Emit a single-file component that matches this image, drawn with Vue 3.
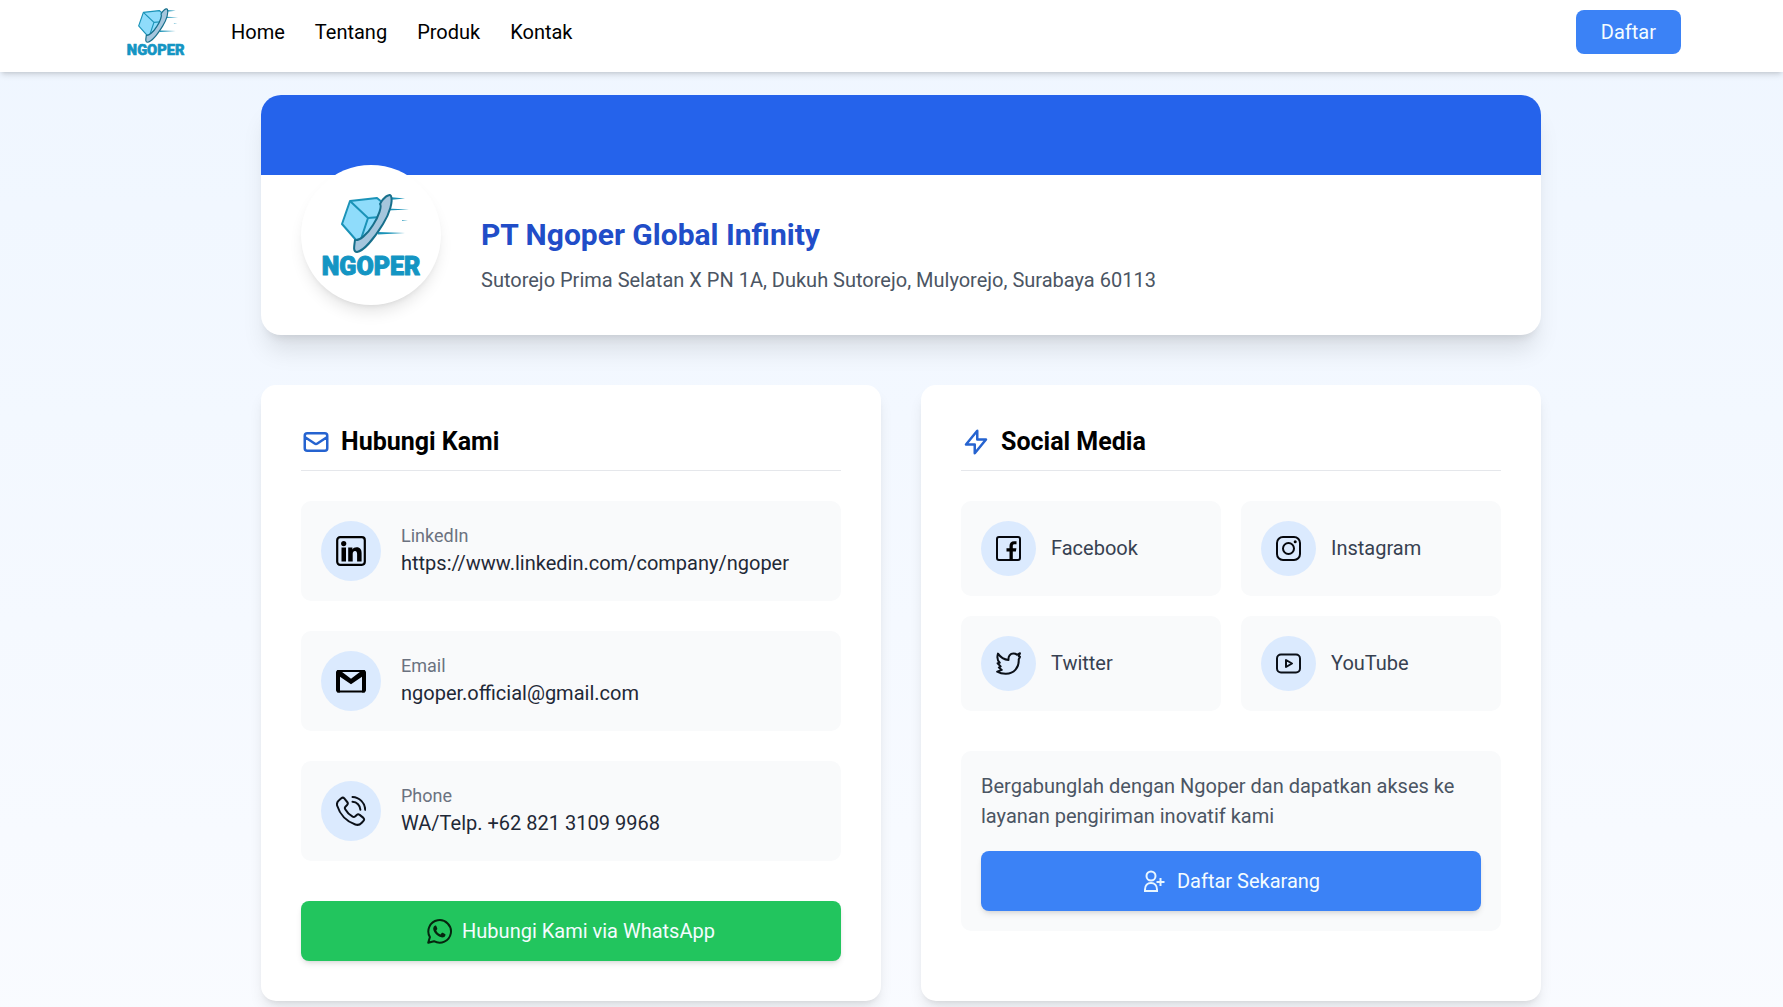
<script setup>
import { h } from 'vue'

const navLinks = ['Home', 'Tentang', 'Produk', 'Kontak']

const contacts = [
  { id: 'linkedin', label: 'LinkedIn', value: 'https://www.linkedin.com/company/ngoper' },
  { id: 'email', label: 'Email', value: 'ngoper.official@gmail.com' },
  { id: 'phone', label: 'Phone', value: 'WA/Telp. +62 821 3109 9968' },
]

const socials = [
  { id: 'facebook', label: 'Facebook' },
  { id: 'instagram', label: 'Instagram' },
  { id: 'twitter', label: 'Twitter' },
  { id: 'youtube', label: 'YouTube' },
]

const BrandLogo = (props) =>
  h('svg', { viewBox: props.box, 'aria-label': 'Ngoper', role: 'img' }, [
    h('path', {
      d: 'M88 32L104 33.500L88 35ZM86 43.500L108 44.500L86 45.500ZM77 67L104 68L77 69.500ZM101 55.200L107 55.500L101 56Z',
      fill: '#1b93b8',
    }),
    h('g', { fill: '#8fdcfb', stroke: '#1b93b8', 'stroke-width': 2, 'stroke-linejoin': 'round' }, [
      h('path', { d: 'M49 36L76 33L82 38L76 58L61 74L55 75L41 59Z' }),
      h('path', { d: 'M49 36L67 53L79 52M67 53L60 74', fill: 'none' }),
    ]),
    h('path', {
      d: 'M54 75C53 82 52 87 56 87C63 86 74 72 82 59C89 48 92 36 90 31C88 28 82 33 79 39C81 41 78 51 72 60C66 70 58 76 54 75Z',
      fill: '#a5c6dd', stroke: '#176f8b', 'stroke-width': 2, 'stroke-linejoin': 'round',
    }),
    h('text', {
      x: 70, y: 109.5, 'text-anchor': 'middle', fill: '#1495c3', stroke: '#1495c3',
      'stroke-width': 1, 'stroke-linejoin': 'round', 'font-size': 25,
      'font-weight': 900, 'font-family': 'Roboto, sans-serif',
    }, 'NGOPER'),
  ])
BrandLogo.props = ['box']
</script>

<template>
  <div class="page">
    <header class="topbar">
      <div class="topbar-inner">
        <a href="#" class="brand"><BrandLogo class="brand-logo" box="11 15 119 109" /></a>
        <nav class="nav">
          <a v-for="link in navLinks" :key="link" href="#">{{ link }}</a>
        </nav>
        <button type="button" class="btn-register">Daftar</button>
      </div>
    </header>

    <main class="content">
      <section class="hero">
        <div class="hero-banner"></div>
        <div class="hero-body">
          <div class="avatar"><BrandLogo box="0 0 140 140" /></div>
          <div class="hero-text">
            <h1>PT Ngoper Global Infinity</h1>
            <p>Sutorejo Prima Selatan X PN 1A, Dukuh Sutorejo, Mulyorejo, Surabaya 60113</p>
          </div>
        </div>
      </section>

      <div class="columns">
        <section class="card">
          <h2>
            <svg viewBox="0 0 24 24" class="heading-icon"><path d="M3 8l7.890 5.260a2 2 0 002.220 0L21 8M5 19h14a2 2 0 002-2V7a2 2 0 00-2-2H5a2 2 0 00-2 2v10a2 2 0 002 2z" /></svg>
            Hubungi Kami
          </h2>
          <ul class="contacts">
            <li v-for="c in contacts" :key="c.id" class="contact">
              <span class="badge">
                <svg v-if="c.id === 'linkedin'" viewBox="0 0 30 30">
                  <rect x="1.200" y="1.200" width="27.600" height="27.600" rx="3" fill="none" stroke="#000" stroke-width="2.200" />
                  <circle cx="7.700" cy="7.600" r="2.600" />
                  <path d="M5.500 11.600h4.500V25.400H5.500zM12.200 11.600h4.200v1.900c.8-1.300 2.200-2.200 4.200-2.200 3.700 0 5 2.400 5 5.900V25.400h-4.500v-7.200c0-1.700-.4-3.100-2.100-3.100s-2.300 1.300-2.300 3.100V25.400h-4.500z" />
                </svg>
                <svg v-else-if="c.id === 'email'" viewBox="0 0 30 30">
                  <path d="M2 5h26v20.500H2z" fill="none" stroke="#000" stroke-width="1.800" />
                  <path d="M2.500 4C1 4 0 5 0 6.500V24c0 1.500 1 2.500 2.500 2.500H4V10.800l11 7.500 11-7.500v15.700h1.500c1.500 0 2.500-1 2.500-2.500V6.500C30 5 29 4 27.500 4h-1L15 12.800 3.500 4z" />
                </svg>
                <svg v-else viewBox="0 0 30 30" class="line">
                  <path d="M3 4.200L5.300 2.200C6.300 1.400 7.500 1.500 8.300 2.400L11.200 6C12 7 11.900 8.200 11.100 9L9.400 10.700C8.700 11.400 8.700 12.300 9.200 13.200C10.900 16.200 13.500 18.900 16.600 20.700C17.500 21.200 18.400 21.100 19.100 20.400L20.700 18.900C21.600 18.100 22.800 18.100 23.700 18.900L27.400 21.900C28.300 22.700 28.400 23.900 27.500 24.800L25.500 27C23.900 28.700 21.700 29.300 19.300 28.500C10.700 25.500 3.800 18.300 1.200 9.800C.5 7.500 1.300 5.600 3 4.200Z" />
                  <path d="M16.500 1C23.400 1.200 29 6.900 29.200 13.800M16.500 5.800C20.900 6 24.200 9.400 24.400 13.800" />
                </svg>
              </span>
              <span class="contact-text">
                <span class="contact-label">{{ c.label }}</span>
                <span class="contact-value">{{ c.value }}</span>
              </span>
            </li>
          </ul>
          <button type="button" class="btn btn-whatsapp">
            <svg viewBox="0 0 25 25">
              <path d="M1.200 23.800L2.900 18.100A11.300 11.300 0 1 1 7 22.200Z" fill="none" stroke="#06250f" stroke-width="2" stroke-linejoin="round" />
              <path d="M8.300 6.400c.5 0 .8.100 1 .6l.9 2.200c.2.500.1.800-.2 1.200l-.8 1c.9 1.800 2.300 3.200 4.300 4.100l1.200-1.400c.3-.4.600-.5 1.100-.3l2.200 1.100c.5.200.6.500.5 1-.3 1.700-1.700 2.500-3.300 2.500-4.200-.3-8.400-4.200-9-8.300 0-1.500.7-3.500 2.100-3.700z" fill="#06250f" />
            </svg>
            Hubungi Kami via WhatsApp
          </button>
        </section>

        <section class="card">
          <h2>
            <svg viewBox="0 0 24 24" class="heading-icon"><path d="M13 10V3L4 14h7v7l9-11h-7z" /></svg>
            Social Media
          </h2>
          <div class="socials">
            <a v-for="s in socials" :key="s.id" href="#" class="social">
              <span class="badge badge-small">
                <svg v-if="s.id === 'facebook'" viewBox="0 0 25 25">
                  <rect x="1" y="1" width="23" height="23" rx="2" fill="none" stroke="#05070d" stroke-width="2" />
                  <path d="M13.500 24v-8.500h-3v-3.200h3V10c0-3 1.700-4.800 4.700-4.800h2.300v3h-1.900c-1.300 0-1.800.6-1.800 1.800v2.300h3.600l-.5 3.200h-3.100V24z" />
                </svg>
                <svg v-else-if="s.id === 'instagram'" viewBox="0 0 25 25">
                  <g fill="none" stroke="#05070d" stroke-width="2">
                    <rect x="1" y="1" width="23" height="23" rx="6" />
                    <circle cx="12.500" cy="12.500" r="5.500" />
                  </g>
                  <circle cx="19.200" cy="5.800" r="1.500" />
                </svg>
                <svg v-else-if="s.id === 'twitter'" viewBox="0 0 25 25" class="line">
                  <path d="M24 5.800L22.700 8.500C23.200 16.500 18 22.600 10 22.800C6 22.900 3.200 21.800 1.200 20.600L5.800 18.900L2.900 16.500L4.600 15.400L1.600 12.200L3.800 11.700C1.400 9.600 .9 6.200 2 2.600C4.600 6.400 8.200 8.600 12.500 8.900C12.100 5.200 14.200 2.600 17.400 2.600C18.800 2.600 20 3 20.900 3.800L24 2.200L22.800 5.200Z" />
                </svg>
                <svg v-else viewBox="0 0 25 25" class="line">
                  <rect x="1" y="3.500" width="23" height="18" rx="4" />
                  <path d="M10 9v7l6-3.500z" />
                </svg>
              </span>
              {{ s.label }}
            </a>
          </div>
          <div class="join">
            <p>Bergabunglah dengan Ngoper dan dapatkan akses ke layanan pengiriman inovatif kami</p>
            <button type="button" class="btn btn-join">
              <svg viewBox="0 0 25 25" fill="none" stroke="#e8f6ff" stroke-width="2">
                <circle cx="9" cy="7" r="4.500" />
                <path d="M3 22v-1.500c0-4 2.500-6.500 6-6.500s6 2.500 6 6.500V22zM18.500 9v8M14.500 13h8" />
              </svg>
              Daftar Sekarang
            </button>
          </div>
        </section>
      </div>
    </main>
  </div>
</template>

<style>
body {
  margin: 0;
}
</style>

<style scoped>
* {
  box-sizing: border-box;
}
.page {
  min-height: 100vh;
  background: linear-gradient(to bottom, #eff6ff, #f9fbff);
  font-family: Roboto, "Liberation Sans", sans-serif;
  font-size: 20px;
  line-height: 30px;
  color: #000;
  overflow: hidden;
}
a {
  color: inherit;
  text-decoration: none;
}
button {
  border: 0;
  font-family: inherit;
  font-size: 20px;
  font-weight: 400;
  line-height: 30px;
  color: #f4fcff;
  border-radius: 8px;
  cursor: pointer;
}
svg {
  display: block;
  flex: none;
}
.topbar {
  position: relative;
  padding: 0 0 8px 19px;
  background: #fff;
  box-shadow: 0 4px 6px -1px rgba(0, 0, 0, 0.12), 0 2px 4px -2px rgba(0, 0, 0, 0.12);
}
.topbar-inner {
  display: flex;
  align-items: center;
  max-width: 1560px;
  height: 64px;
  margin: 0 auto;
}
.brand-logo {
  width: 70px;
  height: 64px;
}
.nav {
  display: flex;
  gap: 30px;
  margin-left: 40px;
}
.btn-register {
  margin-left: auto;
  padding: 7px 25px;
  background: #3b82f6;
}
.content {
  padding: 23px 0 40px 19px;
  max-width: 1299px;
  margin: 0 auto;
}
.hero {
  border-radius: 20px;
  background: #fff;
  box-shadow: 0 20px 25px -5px rgba(0, 0, 0, 0.1), 0 8px 10px -6px rgba(0, 0, 0, 0.1);
}
.hero-banner {
  height: 80px;
  border-radius: 20px 20px 0 0;
  background: #2563eb;
}
.hero-body {
  display: flex;
  gap: 40px;
  padding: 0 40px 30px;
}
.avatar {
  flex: none;
  width: 140px;
  height: 140px;
  margin-top: -10px;
  border-radius: 50%;
  background: #fff;
  box-shadow: 0 10px 15px -3px rgba(0, 0, 0, 0.1), 0 4px 6px -4px rgba(0, 0, 0, 0.1);
}
.hero-text {
  padding-top: 40px;
}
h1 {
  margin: 0 0 10px;
  font-size: 30px;
  line-height: 40px;
  font-weight: 700;
  color: #214dc8;
}
p {
  margin: 0;
  color: #4b5563;
}
.columns {
  display: grid;
  grid-template-columns: 1fr 1fr;
  gap: 40px;
  margin-top: 50px;
}
.card {
  padding: 40px;
  border-radius: 15px;
  background: #fff;
  box-shadow: 0 10px 15px -3px rgba(0, 0, 0, 0.1), 0 4px 6px -4px rgba(0, 0, 0, 0.1);
}
h2 {
  display: flex;
  align-items: center;
  gap: 10px;
  margin: 0 0 30px;
  padding-bottom: 11px;
  border-bottom: 1px solid #e5e7eb;
  font-size: 25px;
  line-height: 34px;
  font-weight: 700;
}
.heading-icon {
  width: 30px;
  height: 30px;
  fill: none;
  stroke: #2563d0;
  stroke-width: 2;
  stroke-linecap: round;
  stroke-linejoin: round;
}
.contacts {
  display: flex;
  flex-direction: column;
  gap: 30px;
  margin: 0;
  padding: 0;
  list-style: none;
}
.contact {
  display: flex;
  align-items: center;
  gap: 20px;
  padding: 20px;
  border-radius: 10px;
  background: #f9fafb;
}
.badge {
  display: flex;
  flex: none;
  padding: 15px;
  border-radius: 50%;
  background: #dbeafe;
}
.badge svg {
  width: 30px;
  height: 30px;
}
.badge-small svg {
  width: 25px;
  height: 25px;
}
.line {
  fill: none;
  stroke: #0b1018;
  stroke-width: 2;
  stroke-linecap: round;
  stroke-linejoin: round;
}
.contact-text {
  display: flex;
  flex-direction: column;
}
.contact-label {
  font-size: 18px;
  line-height: 24px;
  color: #6b7280;
}
.contact-value {
  color: #1f2937;
}
.btn {
  display: flex;
  align-items: center;
  justify-content: center;
  gap: 10px;
  width: 100%;
  padding: 15px;
  box-shadow: 0 4px 6px -1px rgba(0, 0, 0, 0.1), 0 2px 4px -2px rgba(0, 0, 0, 0.1);
}
.btn svg {
  width: 25px;
  height: 25px;
}
.btn-whatsapp {
  margin-top: 40px;
  background: #22c55e;
}
.btn-join {
  margin-top: 20px;
  background: #3b82f6;
}
.socials {
  display: grid;
  grid-template-columns: 1fr 1fr;
  gap: 20px;
}
.social {
  display: flex;
  align-items: center;
  gap: 15px;
  padding: 20px;
  border-radius: 10px;
  background: #f9fafb;
  color: #374151;
  line-height: 31px;
}
.join {
  margin-top: 40px;
  padding: 20px;
  border-radius: 10px;
  background: #f9fafb;
}
</style>
